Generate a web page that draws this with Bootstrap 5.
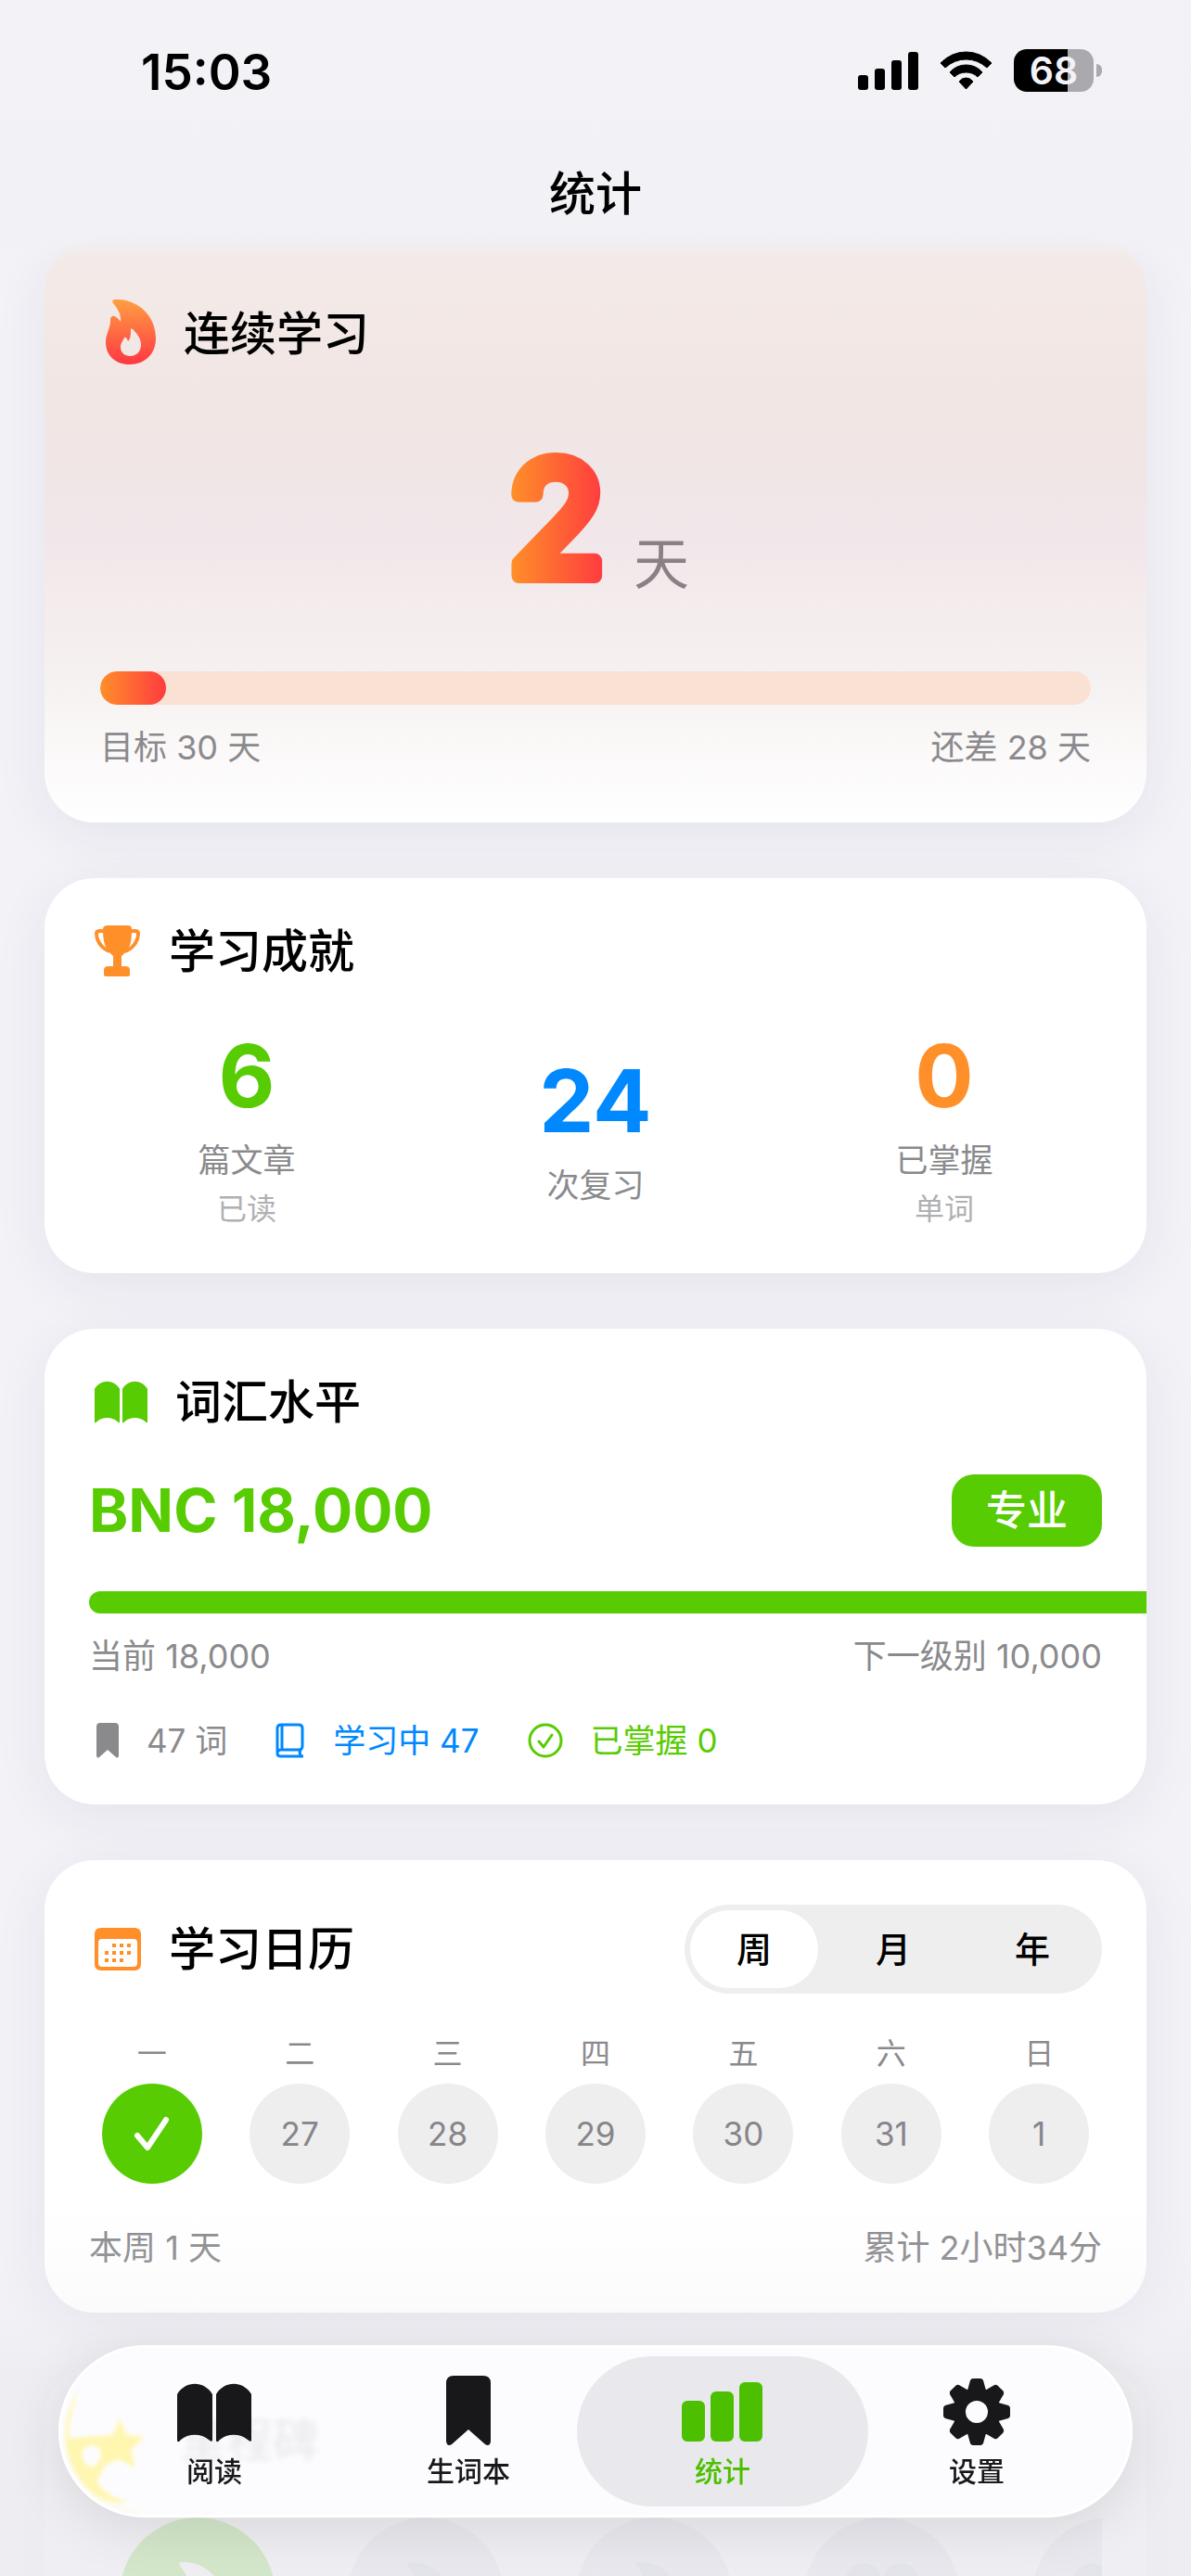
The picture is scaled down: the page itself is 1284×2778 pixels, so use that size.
<!DOCTYPE html>
<html lang="zh-CN">
<head>
<meta charset="utf-8">
<meta name="viewport" content="width=device-width, initial-scale=1">
<title>统计</title>
<link rel="stylesheet" href="https://cdn.jsdelivr.net/npm/bootstrap@5.3.0/dist/css/bootstrap.min.css">
<style>
:root { --green:#58cc02; --orange:#ff8f29; --blue:#0088ff; --muted:#8a8a8d; --page:#f2f2f7; }
body { background:var(--page); color:#000; font-family:Inter,"Noto Sans CJK SC",sans-serif; font-size:36px; line-height:48px; }
.screen { height:100vh; overflow:hidden; position:relative; }
.status-bar { height:162px; padding:48px 96px 0 152px; }
.clock { font-size:53px; line-height:60px; font-weight:600; }
.status-icons { gap:22px; height:56px; }
.battery { gap:3px; }
.battery-body { width:86px; height:46px; border-radius:14px; background:linear-gradient(90deg,#000 68%,#aaaaae 68%); color:#f2f2f7; font-size:41px; line-height:46px; font-weight:600; text-align:center; }
.battery-cap { width:6px; height:14px; border-radius:0 7px 7px 0; background:#aaaaae; }
.top-title { font-size:50px; line-height:60px; font-weight:500; padding:17px 0 21px; margin:0; }
.feed { padding:0 48px; gap:60px; }
.panel { background:#fff; border:0; border-radius:54px; padding:48px 48px 46px; box-shadow:0 12px 60px rgba(40,40,80,.07); flex:none; }
.panel-low { padding-top:49px; padding-bottom:45px; }
.panel-title { font-size:50px; line-height:60px; font-weight:500; margin:0; }
.panel-head { gap:30px; padding-left:6px; }
.text-muted2 { color:var(--muted); }
.text-faint { color:#b0b0b2; font-size:32px; }
.c-green { color:var(--green); } .c-orange { color:var(--orange); } .c-blue { color:var(--blue); }

.streak { padding:60px 60px 57px; background:linear-gradient(#f2ebe9 0,#f3e9e6 8%,#f1e6e3 27%,#f1e6e9 50%,#f4ebed 61%,#f4eded 66%,#f6f1f1 75%,#faf7f7 85%,#fff 100%); }
.streak .panel-head { height:76px; }
.streak .panel-title { padding-top:3px; }
.streak-number { height:234px; margin-top:44px; gap:28px; }
.streak-unit { font-size:60px; line-height:72px; color:#8a8187; padding-bottom:30px; }
.goal-bar { height:36px; border-radius:18px; background:#f9e1d3; margin-top:50px; }
.goal-bar .progress-bar { border-radius:18px; background:linear-gradient(90deg,#ff8f29,#ff3b40); }
.captions { margin-top:22px; }

.figures { gap:36px; margin-top:50px; }
.figure-num { font-size:94px; line-height:108px; font-weight:700; }
.figures .lbl { margin-top:13px; font-size:35px; }
.figures .text-faint { margin-top:5px; }

.level { font-size:64px; line-height:78px; font-weight:700; }
.level-row { margin-top:48px; }
.tag { background:var(--green); font-size:44px; line-height:54px; font-weight:500; padding:12px 37px; border-radius:24px; }
.level-bar { height:24px; border-radius:12px 0 0 12px; background:var(--green); margin:48px -48px 0 0; }
.word-stats { gap:52px; margin-top:43px; font-size:35px; }
.word-stats > div { gap:30px; }

.seg { width:450px; height:96px; border-radius:48px; background:#eee; }
.seg label { margin:6px; border-radius:42px; font-size:38px; line-height:84px; font-weight:500; text-align:center; flex:1; cursor:pointer; }
.seg .btn-check:checked + label { background:#fff; }
.week { gap:24px; margin-top:43px; }
.week > div { flex:1 1 0; }
.dow { font-size:32px; line-height:44px; }
.day { width:108px; height:108px; border-radius:50%; background:#eee; color:#85858a; font-size:35px; margin-top:10px; }
.day.done { background:var(--green); }
.week-foot { margin-top:45px; }

.milestones .panel-head { gap:36px; }
.milestones .panel-title { position:relative; z-index:1; }
.badge-strip { gap:12px; margin-top:53px; overflow:hidden; }
.medal-col { width:234px; flex:none; }
.medal { width:168px; height:168px; border-radius:50%; background:#d6d6e2; color:#b8b8c8; padding-top:48px; }
.medal.won { background:var(--green); color:#fff; }
.fade-bottom { left:0; right:0; bottom:0; height:400px; background:linear-gradient(rgba(236,236,241,0) 0,rgba(236,236,241,.22) 30%,rgba(236,236,241,.82) 46%,rgba(236,236,241,.84) 100%); }
.fade-top { left:0; right:0; top:0; height:280px; z-index:1; background:linear-gradient(var(--page) 0,#f1f1f6 89%,rgba(241,241,246,0) 100%); }
.top-chrome { z-index:2; }

.tabbar { left:63px; right:63px; bottom:63px; height:186px; border-radius:93px; border:3px solid #fff; background:rgba(253,253,255,.93); backdrop-filter:blur(3px); box-shadow:0 12px 60px rgba(0,0,0,.1); padding:9px 28px; overflow:hidden; z-index:3; }
.tab-link { flex:1 1 0; position:relative; color:#18181b; text-decoration:none; font-size:30px; line-height:40px; font-weight:500; }
.tab-link svg { height:78px; margin-top:21px; position:relative; }
.tab-link span { position:relative; margin-top:5px; }
.tab-link.active { color:#4cc000; }
.tab-link.active::before { content:""; position:absolute; inset:0 -20px; border-radius:81px; background:#e9e9ed; }
.glint { left:0; top:0; filter:blur(2px); }
svg { display:block; flex:none; }
</style>
</head>
<body>
<svg width="0" height="0" class="position-absolute" aria-hidden="true">
  <defs>
    <linearGradient id="fire" x1="0" y1="0" x2="0" y2="1"><stop offset="0" stop-color="#ff9f43"/><stop offset="1" stop-color="#ff3742"/></linearGradient>
    <linearGradient id="warm" gradientUnits="userSpaceOnUse" x1="10" y1="0" x2="110" y2="0"><stop offset="0" stop-color="#ff8f29"/><stop offset="1" stop-color="#ff3b40"/></linearGradient>
    <symbol id="flame" viewBox="0 0 54 70"><path fill-rule="evenodd" d="M10 0C34-1 54 17 54 42C54 58 43 70 25.500 70C10 70 0 60 0 46C0 37 5 32 5 22C5 17 9 17 11 19C13 20 15 22 16 24C17 15 12 9 8 4C7 2 7 0 10 0ZM27 33C26 31 29 31 30 33C35 38 38 43 38 49C38 56 33 61 26.500 61C20 61 16 57 16 51C16 47 19 44 20 41C21 40 23 41 24 45C27 42 27 37 27 33Z"/></symbol>
    <symbol id="openbook" viewBox="0 0 80 64"><path d="M0 12C9-3 29-3 38 12V62Q37 64 34 61C26 54 12 54 4 61Q1 65 0 62ZM42 12C51-3 71-3 80 12V62Q79 64 76 61C68 54 54 54 46 61Q43 65 42 62Z"/></symbol>
    <symbol id="bookmark" viewBox="0 0 48 76"><path d="M8 0H40Q48 0 48 8V71Q47 77 42 74L24 58L6 74Q1 77 0 71V8Q0 0 8 0Z"/></symbol>
  </defs>
</svg>

<div class="screen d-flex flex-column">
  <div class="fade-top position-absolute"></div>
  <header class="top-chrome position-relative">
    <div class="status-bar d-flex justify-content-between">
      <div class="clock">15:03</div>
      <div class="status-icons d-flex align-items-center">
        <svg width="66" height="42" viewBox="0 0 66 42"><rect x="0" y="26" width="11" height="16" rx="3"/><rect x="18" y="19" width="11" height="23" rx="3"/><rect x="36" y="10" width="11" height="32" rx="3"/><rect x="54" y="1" width="11" height="41" rx="3"/></svg>
        <svg width="58" height="42" viewBox="0 0 58 42" stroke="#000" stroke-linejoin="round"><path d="M1 13Q13 1 28.500 1T56 13L51 18Q41 9 28.500 9T6 18ZM11 23Q18 15 28.500 15T46 23L41 28Q36 23 28.500 23T16 28ZM21 33Q24 29 28.500 29T36 33L28.500 41Z"/></svg>
        <div class="battery d-flex align-items-center"><div class="battery-body">68</div><div class="battery-cap"></div></div>
      </div>
    </div>
    <h1 class="top-title text-center">统计</h1>
  </header>

  <main class="feed d-flex flex-column">
    <section class="card panel streak">
      <div class="panel-head d-flex align-items-center">
        <svg width="54" height="70" fill="url(#fire)"><use href="#flame"/></svg>
        <h2 class="panel-title">连续学习</h2>
      </div>
      <div class="streak-number d-flex justify-content-center align-items-end">
        <svg width="114" height="234" viewBox="0 0 114 234"><text x="59" y="181" text-anchor="middle" font-size="170" font-weight="500" fill="url(#warm)" stroke="url(#warm)" stroke-width="16" stroke-linejoin="round">2</text></svg>
        <div class="streak-unit">天</div>
      </div>
      <div class="progress goal-bar" role="progressbar" aria-label="目标" aria-valuenow="2" aria-valuemin="0" aria-valuemax="30"><div class="progress-bar" style="width:6.67%"></div></div>
      <div class="captions d-flex justify-content-between text-muted2"><span>目标 30 天</span><span>还差 28 天</span></div>
    </section>

    <section class="card panel panel-low">
      <div class="panel-head d-flex align-items-center">
        <svg width="50" height="56" viewBox="0 0 50 56" fill="#ff8f29"><path d="M14 0H36Q40 0 40 4C40 20 38 26 29 33V44H33Q38 44 38 48V53Q38 55 36 55H12Q10 55 10 53V48Q10 44 15 44H20V33C12 26 9 20 9 4Q9 0 14 0Z"/><path d="M10 6H5Q2 6 2 9C2 17 8 25 16 28M39 6H44Q47 6 47 9C47 17 41 25 33 28" fill="none" stroke="#ff8f29" stroke-width="4"/></svg>
        <h2 class="panel-title">学习成就</h2>
      </div>
      <div class="figures d-flex align-items-center text-center">
        <div class="flex-fill w-100"><div class="figure-num c-green">6</div><div class="lbl text-muted2">篇文章</div><div class="text-faint">已读</div></div>
        <div class="flex-fill w-100"><div class="figure-num c-blue">24</div><div class="lbl text-muted2">次复习</div></div>
        <div class="flex-fill w-100"><div class="figure-num c-orange">0</div><div class="lbl text-muted2">已掌握</div><div class="text-faint">单词</div></div>
      </div>
    </section>

    <section class="card panel panel-low overflow-hidden">
      <div class="panel-head d-flex align-items-center">
        <svg width="57" height="46" fill="#58cc02"><use href="#openbook"/></svg>
        <h2 class="panel-title">词汇水平</h2>
      </div>
      <div class="level-row d-flex justify-content-between align-items-center">
        <div class="level c-green">BNC 18,000</div>
        <span class="tag text-white">专业</span>
      </div>
      <div class="level-bar" role="progressbar" aria-label="词汇水平" aria-valuenow="18000" aria-valuemin="0" aria-valuemax="18000"></div>
      <div class="captions d-flex justify-content-between text-muted2"><span>当前 18,000</span><span>下一级别 10,000</span></div>
      <div class="word-stats d-flex">
        <div class="d-flex align-items-center text-muted2"><svg class="ms-2" width="24" height="38" fill="currentColor"><use href="#bookmark"/></svg><span>47 词</span></div>
        <div class="d-flex align-items-center c-blue"><svg width="32" height="38" viewBox="0 0 32 38" fill="none" stroke="currentColor" stroke-width="3"><path d="M6 2H25Q29 2 29 6V25Q29 29 25 29H6Q2 29 2 33Q2 36 6 36H30M27 29Q25 33 28 36M2 33V6Q2 2 6 2M7 2V29"/></svg><span>学习中 47</span></div>
        <div class="d-flex align-items-center c-green"><svg width="38" height="38" viewBox="0 0 38 38" fill="none" stroke="currentColor" stroke-width="3" stroke-linecap="round" stroke-linejoin="round"><circle cx="19" cy="19" r="17"/><path d="M12 20L17 26L26 13"/></svg><span>已掌握 0</span></div>
      </div>
    </section>

    <section class="card panel">
      <div class="d-flex justify-content-between align-items-center">
        <div class="panel-head d-flex align-items-center">
          <svg width="50" height="46" viewBox="0 0 50 46" fill="#ff8f29"><path fill-rule="evenodd" d="M7 0H43Q50 0 50 7V39Q50 46 43 46H7Q0 46 0 39V7Q0 0 7 0ZM8 12Q4 12 4 16V38Q4 42 8 42H42Q46 42 46 38V16Q46 12 42 12Z"/><path d="M19 19H23M27 19H31M35 19H39M11 27H15M19 27H23M27 27H31M35 27H39M11 35H15M19 35H23M27 35H31" stroke="#ff8f29" stroke-width="4"/></svg>
          <h2 class="panel-title">学习日历</h2>
        </div>
        <div class="seg d-flex" role="group" aria-label="范围">
          <input class="btn-check" type="radio" name="range" id="r-week" checked><label for="r-week">周</label>
          <input class="btn-check" type="radio" name="range" id="r-month"><label for="r-month">月</label>
          <input class="btn-check" type="radio" name="range" id="r-year"><label for="r-year">年</label>
        </div>
      </div>
      <div class="week d-flex text-muted2">
        <div class="d-flex flex-column align-items-center"><div class="dow">一</div><div class="day done d-flex align-items-center justify-content-center"><svg width="40" height="38" viewBox="0 0 40 38" fill="none" stroke="#fff" stroke-width="6" stroke-linecap="round" stroke-linejoin="round"><path d="M4 21L15 34L35 4"/></svg></div></div>
        <div class="d-flex flex-column align-items-center"><div class="dow">二</div><div class="day d-flex align-items-center justify-content-center">27</div></div>
        <div class="d-flex flex-column align-items-center"><div class="dow">三</div><div class="day d-flex align-items-center justify-content-center">28</div></div>
        <div class="d-flex flex-column align-items-center"><div class="dow">四</div><div class="day d-flex align-items-center justify-content-center">29</div></div>
        <div class="d-flex flex-column align-items-center"><div class="dow">五</div><div class="day d-flex align-items-center justify-content-center">30</div></div>
        <div class="d-flex flex-column align-items-center"><div class="dow">六</div><div class="day d-flex align-items-center justify-content-center">31</div></div>
        <div class="d-flex flex-column align-items-center"><div class="dow">日</div><div class="day d-flex align-items-center justify-content-center">1</div></div>
      </div>
      <div class="week-foot d-flex justify-content-between text-muted2"><span>本周 1 天</span><span>累计 2小时34分</span></div>
    </section>

    <section class="card panel milestones">
      <div class="d-flex justify-content-between align-items-center">
        <div class="panel-head d-flex align-items-center">
          <svg width="56" height="56" viewBox="0 0 56 56" fill="#ffdc00"><path d="M28 0L35 20H56L39 32L46 54L28 41L10 54L17 32L0 20H21Z"/></svg>
          <h2 class="panel-title">里程碑</h2>
        </div>
        <span class="text-faint">1/8</span>
      </div>
      <div class="badge-strip d-flex">
        <div class="medal-col d-flex justify-content-center"><div class="medal won d-flex justify-content-center"><svg width="54" height="70" fill="currentColor"><use href="#flame"/></svg></div></div>
        <div class="medal-col d-flex justify-content-center"><div class="medal d-flex justify-content-center"><svg width="54" height="70" fill="currentColor"><use href="#flame"/></svg></div></div>
        <div class="medal-col d-flex justify-content-center"><div class="medal d-flex justify-content-center"><svg width="54" height="70" fill="currentColor"><use href="#flame"/></svg></div></div>
        <div class="medal-col d-flex justify-content-center"><div class="medal d-flex justify-content-center"><svg width="76" height="62" fill="currentColor"><use href="#openbook"/></svg></div></div>
        <div class="medal-col d-flex justify-content-center"><div class="medal d-flex justify-content-center"><svg width="76" height="62" fill="currentColor"><use href="#openbook"/></svg></div></div>
      </div>
    </section>
  </main>

  <div class="fade-bottom position-absolute"></div>
  <nav class="tabbar position-absolute d-flex" aria-label="主导航">
    <svg class="glint position-absolute" width="110" height="180" viewBox="0 0 110 180" fill="#fff6b0" aria-hidden="true"><path fill-rule="evenodd" d="M18 46C8 78 6 96 10 98C28 95 44 95 56 94L63 76L70 94L90 96L75 110L80 130L62 120L48 126L38 144C46 156 56 162 72 166C60 170 46 164 36 157C52 172 76 178 96 178C50 180 14 150 6 110C2 88 6 66 18 46ZM23 112C22 122 28 130 34 128C42 125 44 115 42 110C38 103 26 103 23 112Z"/></svg>
    <a class="tab-link d-flex flex-column align-items-center" href="#read"><svg width="80" height="62" viewBox="0 0 80 62" fill="currentColor"><use href="#openbook" width="80" height="64"/></svg><span>阅读</span></a>
    <a class="tab-link d-flex flex-column align-items-center" href="#words"><svg width="48" viewBox="0 0 48 78" fill="currentColor"><use href="#bookmark" width="48" height="76"/></svg><span>生词本</span></a>
    <a class="tab-link active d-flex flex-column align-items-center" href="#stats" aria-current="page"><svg width="88" viewBox="0 0 88 78" fill="currentColor"><rect x="0" y="27" width="25" height="44" rx="6"/><rect x="31" y="17" width="25" height="54" rx="6"/><rect x="62" y="7" width="25" height="64" rx="6"/></svg><span>统计</span></a>
    <a class="tab-link d-flex flex-column align-items-center" href="#settings"><svg width="74" viewBox="0 0 74 78" fill="currentColor"><g transform="translate(37 39)"><path fill-rule="evenodd" d="M-26 0A26 26 0 1 0 26 0A26 26 0 1 0 -26 0ZM-12 0A12 12 0 1 1 12 0A12 12 0 1 1 -12 0Z"/><g id="teeth"><path id="tooth" d="M-10 -23L-7 -34Q-6 -36 -4 -36H4Q6 -36 7 -34L10 -23Z"/><use href="#tooth" transform="rotate(45)"/><use href="#tooth" transform="rotate(90)"/><use href="#tooth" transform="rotate(135)"/></g><use href="#teeth" transform="rotate(180)"/></g></svg><span>设置</span></a>
  </nav>
</div>
<script src="https://cdn.jsdelivr.net/npm/bootstrap@5.3.0/dist/js/bootstrap.bundle.min.js"></script>
</body>
</html>
